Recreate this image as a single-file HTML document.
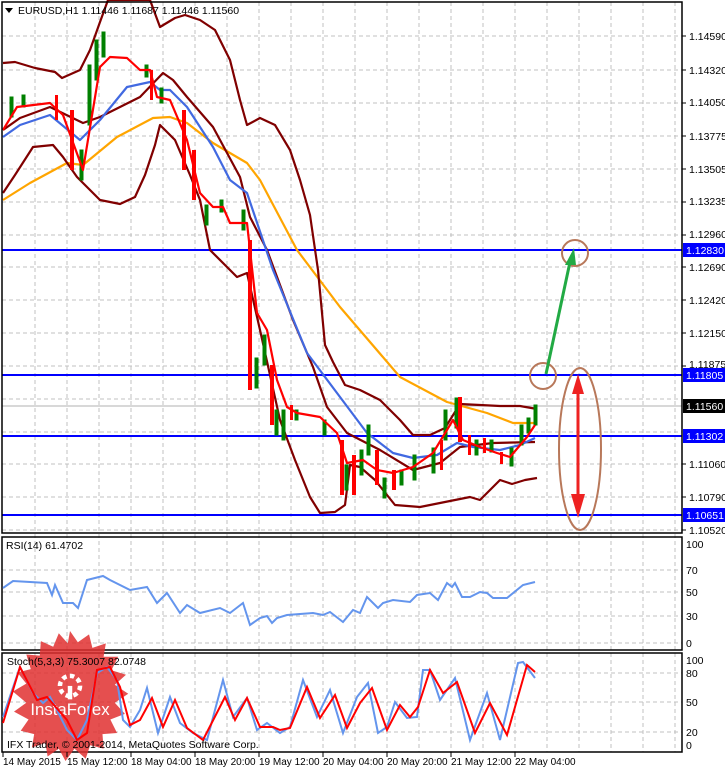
<!DOCTYPE html>
<html><head><meta charset="utf-8"><style>
html,body{margin:0;padding:0;background:#fff;}
svg{display:block;font-family:"Liberation Sans",sans-serif;font-size:10.5px;}
</style></head><body>
<svg width="725" height="770" viewBox="0 0 725 770" xmlns="http://www.w3.org/2000/svg">
<rect width="725" height="770" fill="#fff"/>
<g stroke="#c0c0c0" stroke-dasharray="4,3" stroke-width="1">
<path d="M35 2V752M67 2V752M99 2V752M131 2V752M163 2V752M195 2V752M227 2V752M259 2V752M291 2V752M323 2V752M355 2V752M387 2V752M419 2V752M451 2V752M483 2V752M515 2V752M547 2V752M579 2V752M611 2V752M643 2V752M675 2V752"/>
<path d="M2 36H682M2 70H682M2 103H682M2 136H682M2 169H682M2 202H682M2 235H682M2 267H682M2 300H682M2 333H682M2 366H682M2 399H682M2 432H682M2 464H682M2 497H682M2 530H682"/>
<path d="M2 570H682M2 592H682M2 616H682M2 643H682M2 673H682M2 702H682M2 732H682"/>
</g>
<line x1="2" y1="406" x2="682" y2="406" stroke="#b0b0b0"/>
<g stroke="#0000ff" stroke-width="2">
<line x1="2" y1="250" x2="682" y2="250"/><line x1="2" y1="375" x2="682" y2="375"/>
<line x1="2" y1="436" x2="682" y2="436"/><line x1="2" y1="515" x2="682" y2="515"/>
</g>
<g fill="none" stroke-width="2.2" stroke-linejoin="round">
<polyline stroke="#ffa500" points="3,200 30,183 67,163 83,165 117,137 153,118 170,117 187,123 213,143 247,163 260,180 297,250 340,307 400,377 447,402 487,413 513,423 535,423"/>
<polyline stroke="#800000" points="3,63 15,62 35,68 55,72 62,78 80,70 90,50 100,22 108,0 150,0 160,27 175,18 185,15 200,20 215,30 230,60 240,100 247,125 260,118 275,125 290,150 300,180 310,215 318,270 325,345 333,362 345,385 360,390 380,400 400,420 413,435 430,435 445,428 460,404 480,405 500,406 520,406 537,409"/>
<polyline stroke="#800000" points="3,130 20,118 50,107 83,123 100,117 140,97 163,73 173,80 187,97 213,127 240,177 250,217 267,250 293,320 313,367 327,407 347,433 380,450 413,470 440,463 460,447 493,443 535,442"/>
<polyline stroke="#800000" points="3,193 15,175 33,147 53,145 63,157 77,177 100,200 120,204 135,197 145,175 155,145 160,125 175,140 190,175 200,200 210,250 237,277 247,273 260,330 280,420 295,460 310,497 320,513 335,512 345,505 350,465 360,467 375,480 395,505 420,507 450,501 470,497 480,500 500,480 512,484 525,480 537,478"/>
<polyline stroke="#4169e1" points="3,137 20,125 50,115 80,140 100,120 127,87 150,82 160,90 170,90 187,107 213,147 230,180 247,193 273,270 307,353 337,393 367,433 393,453 413,458 437,455 457,443 473,447 500,450 520,445 535,438"/>
</g>
<g fill="#008000" stroke="#008000">
<rect x="10" y="97" width="3" height="20"/><rect x="22" y="95" width="3" height="12"/><rect x="80" y="150" width="3" height="30"/><rect x="88" y="65" width="3" height="60"/><rect x="95" y="40" width="3" height="40"/><rect x="102" y="32" width="3" height="25"/><rect x="145" y="65" width="3" height="12"/><rect x="160" y="88" width="3" height="15"/><rect x="205" y="205" width="3" height="20"/><rect x="220" y="200" width="3" height="12"/><rect x="242" y="210" width="3" height="20"/><rect x="255" y="358" width="3" height="30"/><rect x="263" y="335" width="3" height="30"/><rect x="275" y="410" width="3" height="25"/><rect x="282" y="410" width="3" height="30"/><rect x="295" y="410" width="3" height="10"/><rect x="323" y="420" width="3" height="15"/><rect x="345" y="465" width="3" height="25"/><rect x="360" y="450" width="3" height="25"/><rect x="367" y="425" width="3" height="30"/><rect x="383" y="478" width="3" height="20"/><rect x="400" y="470" width="3" height="15"/><rect x="413" y="455" width="3" height="25"/><rect x="432" y="448" width="3" height="25"/><rect x="444" y="410" width="3" height="30"/><rect x="455" y="398" width="3" height="30"/><rect x="475" y="440" width="3" height="15"/><rect x="490" y="440" width="3" height="12"/><rect x="510" y="448" width="3" height="18"/><rect x="520" y="425" width="3" height="20"/><rect x="527" y="418" width="3" height="15"/><rect x="534" y="405" width="3" height="20"/>
</g>
<g fill="none" stroke="#ff0000" stroke-width="2.2" stroke-linejoin="round">
<polyline points="3,130 17,107 50,103 63,115 83,170 100,67 110,57 127,58 140,70 150,70 157,97 170,100 187,140 200,193 213,207 223,207 230,223 247,223 257,313 267,330 277,380 287,407 297,413 320,417 337,433 347,463 363,460 377,470 393,473 413,467 433,453 453,420 463,440 480,447 497,453 510,457 527,437 535,425"/>
</g>
<g fill="#ff0000">
<rect x="55" y="95" width="3" height="25"/><rect x="70" y="110" width="4" height="60"/><rect x="150" y="70" width="3" height="30"/><rect x="182" y="110" width="4" height="60"/><rect x="192" y="150" width="4" height="50"/><rect x="248" y="240" width="4" height="150"/><rect x="270" y="365" width="4" height="60"/><rect x="290" y="405" width="3" height="15"/><rect x="340" y="440" width="4" height="55"/><rect x="352" y="455" width="4" height="40"/><rect x="375" y="450" width="4" height="35"/><rect x="392" y="470" width="4" height="20"/><rect x="440" y="440" width="3" height="30"/><rect x="458" y="397" width="4" height="45"/><rect x="468" y="435" width="3" height="20"/><rect x="483" y="438" width="3" height="15"/><rect x="500" y="452" width="3" height="12"/></g>
<g fill="none" stroke="#b8785a" stroke-width="2">
<ellipse cx="580" cy="449" rx="21" ry="81"/><circle cx="543" cy="376" r="13"/><circle cx="575" cy="253" r="13"/>
</g>
<line x1="546" y1="374" x2="570" y2="262" stroke="#22aa44" stroke-width="3"/>
<polygon points="574,248 565,265 576,265" fill="#22aa44"/>
<line x1="578" y1="382" x2="578" y2="510" stroke="#ee2222" stroke-width="3"/>
<polygon points="578,374 572,394 584,394" fill="#ee2222"/>
<polygon points="578,518 571,494 585,494" fill="#ee2222"/>
<g fill="none" stroke="#000" stroke-width="1.5">
<rect x="2" y="2" width="680" height="531"/>
<rect x="2" y="537" width="680" height="113"/>
<rect x="2" y="653" width="680" height="99"/>
</g>
<polyline fill="none" stroke="#6495ed" stroke-width="2" points="3,588 13,581 47,583 52,595 55,585 63,603 73,603 78,608 87,580 103,576 110,580 130,590 147,587 157,603 167,593 180,613 187,605 200,613 220,608 230,613 243,603 250,625 260,618 267,616 272,623 277,618 287,615 313,613 323,615 330,612 343,622 353,610 360,613 367,597 378,608 383,603 393,600 410,602 417,595 430,593 438,600 447,583 452,587 455,583 462,597 470,597 480,592 487,593 493,598 507,598 523,585 535,582"/>
<g transform="translate(70,696) scale(1.12)">
<polygon fill="#e03030" opacity="0.85" points="0,-58 7,-48 17,-55 20,-43 32,-47 30,-35 43,-35 37,-23 50,-19 40,-10 52,-2 40,6 49,16 36,21 42,33 29,34 30,47 18,44 14,56 4,47 -4,58 -10,47 -20,54 -22,42 -34,46 -32,34 -44,31 -37,21 -50,14 -39,6 -51,-4 -39,-11 -47,-21 -35,-24 -39,-37 -27,-36 -26,-49 -15,-44 -10,-56 -2,-47"/>
<circle cx="0" cy="-9" r="9" fill="none" stroke="#fff" stroke-width="4" stroke-dasharray="4,3"/>
<rect x="-2" y="-9" width="4" height="12" fill="#fff"/>
<text x="0" y="17" fill="#fff" font-size="15" text-anchor="middle">InstaForex</text>
</g>
<polyline fill="none" stroke="#6495ed" stroke-width="2" points="3,717 20,667 33,693 43,703 50,697 57,710 67,730 77,740 87,720 97,673 107,667 117,680 123,720 130,727 140,710 147,688 158,733 170,697 180,723 193,733 207,740 223,680 233,717 247,698 257,730 267,723 280,733 290,727 303,680 317,717 330,690 343,733 357,697 368,683 378,733 387,727 395,702 407,718 417,717 423,670 430,670 440,700 455,678 470,740 487,693 500,740 518,663 523,662 535,678"/>
<polyline fill="none" stroke="#ff0000" stroke-width="2" points="3,723 20,667 37,700 47,697 67,720 77,740 87,733 97,670 110,667 120,687 130,725 140,720 152,698 163,727 175,700 187,728 203,740 225,697 235,720 247,698 260,727 273,727 280,730 290,728 307,687 320,718 335,695 347,728 360,703 372,688 387,730 400,705 410,717 418,707 430,670 443,693 457,682 475,733 490,703 507,735 527,665 535,672"/>
<polygon points="5,8 13,8 9,13" fill="#000"/>
<text x="18" y="14">EURUSD,H1  1.11446 1.11687 1.11446 1.11560</text>
<text x="6" y="549">RSI(14) 61.4702</text>
<text x="7" y="665">Stoch(5,3,3) 75.3007 82.0748</text>
<text x="7" y="748">IFX Trader, © 2001-2014, MetaQuotes Software Corp.</text>
<g fill="#000">
<text x="689" y="40">1.14590</text><text x="689" y="74">1.14320</text><text x="689" y="106">1.14050</text><text x="689" y="140">1.13775</text><text x="689" y="173">1.13505</text><text x="689" y="205">1.13235</text><text x="689" y="238">1.12960</text><text x="689" y="271">1.12690</text><text x="689" y="304">1.12420</text><text x="689" y="337">1.12150</text><text x="689" y="368">1.11875</text><text x="689" y="468">1.11060</text><text x="689" y="501">1.10790</text><text x="689" y="534">1.10520</text>
<text x="686" y="548">100</text><text x="686" y="574">70</text><text x="686" y="596">50</text><text x="686" y="620">30</text><text x="686" y="647">0</text>
<text x="686" y="664">100</text><text x="686" y="677">80</text><text x="686" y="706">50</text><text x="686" y="736">20</text><text x="686" y="749">0</text>
</g>
<g stroke="#000"><path d="M682 36h4M682 70h4M682 103h4M682 136h4M682 169h4M682 202h4M682 235h4M682 267h4M682 300h4M682 333h4M682 366h4M682 464h4M682 497h4M682 530h4"/></g>
<rect x="683" y="243" width="42" height="14" fill="#0000ff"/><text x="686" y="254" fill="#fff">1.12830</text>
<rect x="683" y="368" width="42" height="14" fill="#0000ff"/><text x="686" y="379" fill="#fff">1.11805</text>
<rect x="683" y="399" width="42" height="14" fill="#000"/><text x="686" y="410" fill="#fff">1.11560</text>
<rect x="683" y="429" width="42" height="14" fill="#0000ff"/><text x="686" y="440" fill="#fff">1.11302</text>
<rect x="683" y="508" width="42" height="14" fill="#0000ff"/><text x="686" y="519" fill="#fff">1.10651</text>
<g stroke="#000"><path d="M3 752v5M67 752v5M131 752v5M195 752v5M259 752v5M323 752v5M387 752v5M451 752v5M515 752v5"/></g>
<g fill="#000" font-size="10">
<text x="3" y="765">14 May 2015</text><text x="67" y="765">15 May 12:00</text><text x="131" y="765">18 May 04:00</text><text x="195" y="765">18 May 20:00</text><text x="259" y="765">19 May 12:00</text><text x="323" y="765">20 May 04:00</text><text x="387" y="765">20 May 20:00</text><text x="451" y="765">21 May 12:00</text><text x="515" y="765">22 May 04:00</text>
</g>
</svg>
</body></html>
